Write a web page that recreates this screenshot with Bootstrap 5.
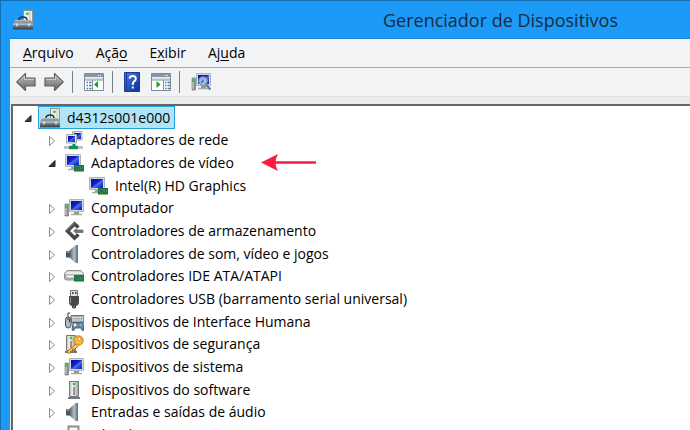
<!DOCTYPE html>
<html lang="pt-BR">
<head>
<meta charset="utf-8">
<meta name="viewport" content="width=device-width, initial-scale=1">
<title>Gerenciador de Dispositivos</title>
<link href="https://cdn.jsdelivr.net/npm/bootstrap@5.3.0/dist/css/bootstrap.min.css" rel="stylesheet">
<style>
  body { font-family: "Open Sans", "Noto Sans", sans-serif; font-size: 14px; color: #000; }
  .window { background: #1b9af7; border-top: 1px solid #176fb0; border-left: 1px solid #176fb0; padding-left: 9px; }
  .titlebar { height: 38px; padding-left: 3px; border-bottom: 1px solid #1c84d0; }
  .titlebar h1 { font-size: 18px; line-height: 24px; color: #1a2b40; padding-left: 278px; }
  .client { background: #ebebeb; }
  .menus { height: 29px; padding-left: 13px; gap: 22px; background: #f2f3f5; border-bottom: 1px solid #a5a9ac; }
  .menus .btn { font-size: 14px; line-height: 20px; color: #000; }
  .menus u { text-underline-offset: 2px; }
  .tools { height: 29px; padding-left: 6px; gap: 8px; background: #f2f3f5; border-bottom: 1px solid #dfe3e3; }
  .tools .btn { line-height: 0; }
  .tools .spaced { margin-left: 3px; }
  .rule { width: 1px; height: 22px; background: #7c7f83; }
  .pane { margin-top: 7px; border: solid #666; border-width: 2px 0 0 2px; background: #fff; margin-left: 1px; }
  .tree { display: grid; grid-auto-rows: 23px 22px 23px; padding-left: 5px; }
  .level-1 { padding-left: 24px; }
  .level-2 { padding-left: 48px; }
  .twisty { width: 20px; line-height: 0; }
  .node { padding: 0 4px 0 1px; gap: 7px; line-height: 20px; border: 1px solid transparent; white-space: nowrap; }
  .node.chosen { background: #b0e5f6; border-color: #26a0da; }
  .pointer { margin-left: 22px; }
  svg { flex: none; }
</style>
</head>
<body>
<svg width="0" height="0" class="position-absolute" aria-hidden="true">
  <defs>
    <linearGradient id="g-metal" x2="0" y2="1"><stop stop-color="#a9b6be"/><stop offset=".5" stop-color="#68767f"/><stop offset="1" stop-color="#3f4b53"/></linearGradient>
    <linearGradient id="g-arrow" x2="0" y2="1"><stop stop-color="#bcbcbc"/><stop offset="1" stop-color="#686868"/></linearGradient>
    <linearGradient id="g-screen" x2="1" y2="1"><stop stop-color="#0a0aa8"/><stop offset=".45" stop-color="#1420c8"/><stop offset=".55" stop-color="#4a6cf0"/><stop offset="1" stop-color="#0c14b0"/></linearGradient>
    <linearGradient id="g-help" x2="1" y2="1"><stop stop-color="#4b7fe0"/><stop offset="1" stop-color="#0a2c9c"/></linearGradient>
    <linearGradient id="g-cone" x2="1" y2="0"><stop stop-color="#4f5b66"/><stop offset=".6" stop-color="#b4c0ca"/><stop offset="1" stop-color="#5d7386"/></linearGradient>
    <linearGradient id="g-box" x2="1" y2="0"><stop stop-color="#b9bcbc"/><stop offset=".4" stop-color="#fafafa"/><stop offset="1" stop-color="#999"/></linearGradient>
  </defs>
  <symbol id="closed" viewBox="0 0 10 12"><path d="M2.500 2.500v9L7.500 7z" fill="#fff" stroke="#8c8c8c" stroke-width="1"/></symbol>
  <symbol id="open" viewBox="0 0 10 12"><path d="M8 3.500v6H2z" fill="#383838" stroke="#222" stroke-width="1"/></symbol>
  <symbol id="toolbox" viewBox="0 0 20 20">
    <path d="M10.500.5h9v13h-9z" fill="#edf0ee" stroke="#8d9392"/><path d="M17 1v12" stroke="#c1c6c5"/><circle cx="14.500" cy="3.800" r="1.300" fill="#19c42a"/>
    <path d="M6 10c0-4 8-4 8 0" fill="none" stroke="#28333a" stroke-width="1.600"/>
    <path d="M2 10h16l2 4H0z" fill="#8b9aa3"/><path d="M0 13h20v6H0z" fill="url(#g-metal)"/><path d="M2 10.500h16M0 14.500h20" stroke="#cbd3d7" stroke-width=".6"/><path d="M4 13.500v3M16 13.500v3" stroke="#eef2f4" stroke-width="1.200"/><path d="M0 19h20" stroke="#3a454c"/>
  </symbol>
  <symbol id="monitor" viewBox="0 0 20 20">
    <path d="M1.500 1.500h15v12h-15z" fill="#d8dbdc" stroke="#aeb3b5"/><path d="M3 3h12v9H3z" fill="url(#g-screen)"/><path d="M7 14h5v2H7z" fill="#999fa2"/><path d="M4 16.500h10" stroke="#a3a8aa" stroke-width="1.500"/>
  </symbol>
  <symbol id="chip" viewBox="0 0 10 8"><path d="M0 0h10v6.500H0z" fill="#117548"/><path d="M2 2h3v2H2zM6.500 2h2v2h-2z" fill="#0a3022" stroke="#7cc08f" stroke-width=".5"/><path d="M2 6.800h6" stroke="#d1b82c" stroke-dasharray="1 1"/></symbol>
  <symbol id="display" viewBox="0 0 20 20"><use href="#monitor" width="20" height="20"/><use href="#chip" x="10" y="12" width="10" height="8"/></symbol>
  <symbol id="network" viewBox="0 0 20 20">
    <path d="M8.500 1.500h9.500v8.500H8.500z" fill="#e2e5e8" stroke="#a7acb2"/><path d="M10 3h7v6h-7z" fill="url(#g-screen)"/>
    <path d="M2.500 4.500h10v8.500h-10z" fill="#e2e5e8" stroke="#a7acb2"/><path d="M4 6h7v6H4z" fill="url(#g-screen)"/>
    <path d="M0 17.500h19" stroke="#b1bcbc" stroke-width="2.500"/><path d="M10 14v3" stroke="#129152" stroke-width="3"/><path d="M5 17.500h9" stroke="#129152" stroke-width="3.500"/>
  </symbol>
  <symbol id="computer" viewBox="0 0 20 20">
    <path d="M5.500 1.500h14v12h-14z" fill="#d8dbdc" stroke="#aeb3b5"/><path d="M7 3h11v9H7z" fill="url(#g-screen)"/><path d="M10 14h5v2h-5z" fill="#8e9598"/><path d="M7 16.500h11" stroke="#a3a8aa" stroke-width="1.500"/>
    <path d="M1 6h3.500v12H1z" fill="#87918f" stroke="#68716f" stroke-width=".6"/><path d="M1.500 7.500h2.500" stroke="#2cdb45" stroke-width="2"/><path d="M2 10v7" stroke="#d7dcda"/>
  </symbol>
  <symbol id="storage" viewBox="0 0 20 20">
    <path d="M14.500 6.500L10.500 3 3.500 10l7 7 4-3.500" fill="none" stroke="#484848" stroke-width="3.600"/><path d="M10.500 2L3 9.500" stroke="#858585"/>
    <path d="M9 10h11" stroke="#fff" stroke-width="5"/><path d="M9.500 10l3-2.500V9H19v2.500h-6.500v1z" fill="#777" stroke="#555" stroke-width=".6"/>
  </symbol>
  <symbol id="speaker" viewBox="0 0 20 20"><path d="M2 7h4v6.500H2z" fill="#4b5359"/><path d="M5.500 6.500L11.500 1h2v18h-2l-6-5.500z" fill="url(#g-cone)"/><path d="M13.500 1v18" stroke="#60788b"/><path d="M2.500 8h3" stroke="#bfc6ca"/></symbol>
  <symbol id="drive" viewBox="0 0 20 20"><path d="M3 4.500h14l2.500 3v4.500q0 2-2 2h-15q-2 0-2-2V7.500z" fill="#b7bbbc" stroke="#8e9394"/><path d="M3 5.500h14l2 3H1z" fill="#e9ebeb"/><path d="M2 9h16v3H2z" fill="#f7f7f7" stroke="#858a8b" stroke-width=".7"/><use href="#chip" x="10" y="9" width="10" height="8"/></symbol>
  <symbol id="usb" viewBox="0 0 20 20"><path d="M6.500 1.500h7v6h-7z" fill="#e5e5e5" stroke="#777"/><path d="M8 3h1.500v2H8zM11 3h1.500v2H11z" fill="#444"/><path d="M5 7h10v6q0 3-3 4v2H8v-2q-3-1-3-4z" fill="#444a4c"/><path d="M6.500 8v6" stroke="#8c9294"/><path d="M10 17v3" stroke="#777" stroke-width="1.500"/></symbol>
  <symbol id="hid" viewBox="0 0 20 20">
    <path d="M7 3.500h13v7H7z" fill="#a9b0b3" stroke="#69757d"/><path d="M8 5.500h11M8 8h11" stroke="#f5f5f5" stroke-dasharray="1.500 1"/>
    <rect x="1.500" y="5" width="5.500" height="11" rx="2.700" fill="#b4b8ba" stroke="#464b4f"/><path d="M4 5V1h2M3 7h2.500v3" fill="none" stroke="#363c40"/>
    <path d="M9 11q2-2 4 0h2q2-2 4 0l1 7q-2 2-3-2h-6q-1 4-3 2z" fill="#73899b" stroke="#354b5e" stroke-width=".8"/><circle cx="11" cy="13" r="1.400" fill="#e8f4fb"/><circle cx="17" cy="13" r="1.400" fill="#4db9f3"/>
  </symbol>
  <symbol id="tower" viewBox="0 0 20 20"><path d="M5.500 1.500h9v15h-9z" fill="url(#g-box)" stroke="#777"/><circle cx="10" cy="4" r="1.400" fill="#24cc36"/><path d="M10 7v8" stroke="#777" stroke-width="1.500"/><path d="M4 18h12" stroke="#737878" stroke-width="2"/></symbol>
  <symbol id="security" viewBox="0 0 20 20"><use href="#tower" x="-3" y="0" width="20" height="20"/><path d="M12 10l-8.500 7.500v1.500h3v-2h2v-2h2l4-3" fill="#ffd557" stroke="#b66c12"/><circle cx="14.500" cy="6.500" r="4.700" fill="#ffb733" stroke="#c4791a"/><circle cx="15.500" cy="5" r="1.500" fill="#fff" stroke="#b66c12" stroke-width=".6"/></symbol>
  <symbol id="card" viewBox="0 0 20 20"><path d="M4.500 1.500h10v16h-10z" fill="#fafafa" stroke="#8c8c8c" stroke-width="2"/></symbol>
  <symbol id="arrow" viewBox="0 0 20 20"><path d="M.8 10L9.500 1.500V6H19v8H9.500v4.500z" fill="url(#g-arrow)" stroke="#626262" stroke-width="1.200" stroke-linejoin="round"/><path d="M2.500 10l6-6v3.500h9.500" fill="none" stroke="#d3d3d3" stroke-width=".8"/></symbol>
  <symbol id="panel" viewBox="0 0 20 18"><path d="M.5.500h19v17H.5z" fill="#fff" stroke="#7e8b99"/><path d="M1 1h18v3H1z" fill="#8796a6"/><path d="M14 2.500h4" stroke="#fff" stroke-dasharray="1 1"/><path d="M1 5.500h18" stroke="#d6dbe1" stroke-width="2"/><path d="M1 7h18" stroke="#8290a0"/></symbol>
</svg>

<div class="window min-vh-100 d-flex flex-column">
  <header class="titlebar d-flex align-items-center">
    <svg width="20" height="20" aria-hidden="true"><use href="#toolbox"/></svg>
    <h1 class="m-0 flex-grow-1 fw-normal text-center">Gerenciador de Dispositivos</h1>
  </header>

  <main class="client flex-grow-1 d-flex flex-column">
    <nav class="menus d-flex align-items-center" aria-label="Menu">
      <button type="button" class="btn border-0 p-0"><u>A</u>rquivo</button>
      <button type="button" class="btn border-0 p-0">Açã<u>o</u></button>
      <button type="button" class="btn border-0 p-0">E<u>x</u>ibir</button>
      <button type="button" class="btn border-0 p-0">Aj<u>u</u>da</button>
    </nav>

    <div class="tools d-flex align-items-center" role="toolbar" aria-label="Ferramentas">
      <button type="button" class="btn border-0 p-0" aria-label="Voltar"><svg width="20" height="20"><use href="#arrow"/></svg></button>
      <button type="button" class="btn border-0 p-0" aria-label="Avançar"><svg width="20" height="20" viewBox="0 0 20 20"><g transform="translate(20 0) scale(-1 1)"><use href="#arrow" width="20" height="20"/></g></svg></button>
      <span class="rule"></span>
      <button type="button" class="btn border-0 p-0 spaced" aria-label="Mostrar árvore"><svg width="20" height="18" viewBox="0 0 20 18"><use href="#panel" width="20" height="18"/><path d="M8.500 7v10" stroke="#8290a0"/><path d="M2.500 9.500h5M2.500 12.500h5M2.500 15.500h5" stroke="#447cb8" stroke-width="1.500" stroke-dasharray="1.500 1 2.500 0"/><path d="M14 8v7l-4-3.500z" fill="#12a51b"/></svg></button>
      <span class="rule"></span>
      <button type="button" class="btn border-0 p-0 spaced" aria-label="Ajuda"><svg width="16" height="20" viewBox="0 0 16 20"><path d="M.5.500h15v19H.5z" fill="url(#g-help)" stroke="#173b9a"/><path d="M2.500 1v18" stroke="#163793"/><path d="M5.500 6.500Q6 4 8.800 4q3 0 3 2.700 0 1.600-1.700 2.700-1.300.9-1.300 2.600v1" fill="none" stroke="#fff" stroke-width="2"/><path d="M7.800 14.500h2v2h-2z" fill="#fff"/></svg></button>
      <button type="button" class="btn border-0 p-0 spaced" aria-label="Painel de ações"><svg width="20" height="18" viewBox="0 0 20 18"><use href="#panel" width="20" height="18"/><path d="M12.500 7v10" stroke="#8290a0"/><path d="M14 9.500h5M14 12.500h5M14 15.500h5" stroke="#447cb8" stroke-width="1.500" stroke-dasharray="1.500 1 2.500 0"/><path d="M5.500 8v7l4-3.500z" fill="#12a51b"/></svg></button>
      <span class="rule"></span>
      <button type="button" class="btn border-0 p-0 spaced" aria-label="Verificar se há alterações de hardware"><svg width="20" height="20" viewBox="0 0 20 20"><use href="#computer" width="20" height="20"/><circle cx="12" cy="9" r="4.200" fill="#b9dcff" fill-opacity=".8" stroke="#8190a0" stroke-width="1.200"/><path d="M9.500 11l3-4.500v4z" fill="#3b65ce"/><path d="M15 12.500l4.500 5" stroke="#55789e" stroke-width="2"/></svg></button>
    </div>

    <section class="pane flex-grow-1">
      <ul class="tree list-unstyled m-0" role="tree" aria-label="Dispositivos">
        <li class="d-flex" role="treeitem"><span class="twisty d-flex align-items-center justify-content-center"><svg width="10" height="12"><use href="#open"/></svg></span><span class="node chosen d-flex align-items-center"><svg width="20" height="20"><use href="#toolbox"/></svg>d4312s001e000</span></li>
        <li class="level-1 d-flex" role="treeitem"><span class="twisty d-flex align-items-center justify-content-center"><svg width="10" height="12"><use href="#closed"/></svg></span><span class="node d-flex align-items-center"><svg width="20" height="20"><use href="#network"/></svg>Adaptadores de rede</span></li>
        <li class="level-1 d-flex align-items-center" role="treeitem"><span class="twisty d-flex align-items-center justify-content-center"><svg width="10" height="12"><use href="#open"/></svg></span><span class="node d-flex align-items-center"><svg width="20" height="20"><use href="#display"/></svg>Adaptadores de vídeo</span><svg class="pointer" width="56" height="20" viewBox="0 0 56 20" aria-hidden="true"><path d="M0 9.500L17 1q-5 8.500 0 17z" fill="#fb1b3f"/><path d="M13 9.500h42" stroke="#fb1b3f" stroke-width="2.600"/></svg></li>
        <li class="level-2 d-flex" role="treeitem"><span class="twisty"></span><span class="node d-flex align-items-center"><svg width="20" height="20"><use href="#display"/></svg>Intel(R) HD Graphics</span></li>
        <li class="level-1 d-flex" role="treeitem"><span class="twisty d-flex align-items-center justify-content-center"><svg width="10" height="12"><use href="#closed"/></svg></span><span class="node d-flex align-items-center"><svg width="20" height="20"><use href="#computer"/></svg>Computador</span></li>
        <li class="level-1 d-flex" role="treeitem"><span class="twisty d-flex align-items-center justify-content-center"><svg width="10" height="12"><use href="#closed"/></svg></span><span class="node d-flex align-items-center"><svg width="20" height="20"><use href="#storage"/></svg>Controladores de armazenamento</span></li>
        <li class="level-1 d-flex" role="treeitem"><span class="twisty d-flex align-items-center justify-content-center"><svg width="10" height="12"><use href="#closed"/></svg></span><span class="node d-flex align-items-center"><svg width="20" height="20"><use href="#speaker"/></svg>Controladores de som, vídeo e jogos</span></li>
        <li class="level-1 d-flex" role="treeitem"><span class="twisty d-flex align-items-center justify-content-center"><svg width="10" height="12"><use href="#closed"/></svg></span><span class="node d-flex align-items-center"><svg width="20" height="20"><use href="#drive"/></svg>Controladores IDE ATA/ATAPI</span></li>
        <li class="level-1 d-flex" role="treeitem"><span class="twisty d-flex align-items-center justify-content-center"><svg width="10" height="12"><use href="#closed"/></svg></span><span class="node d-flex align-items-center"><svg width="20" height="20"><use href="#usb"/></svg>Controladores USB (barramento serial universal)</span></li>
        <li class="level-1 d-flex" role="treeitem"><span class="twisty d-flex align-items-center justify-content-center"><svg width="10" height="12"><use href="#closed"/></svg></span><span class="node d-flex align-items-center"><svg width="20" height="20"><use href="#hid"/></svg>Dispositivos de Interface Humana</span></li>
        <li class="level-1 d-flex" role="treeitem"><span class="twisty d-flex align-items-center justify-content-center"><svg width="10" height="12"><use href="#closed"/></svg></span><span class="node d-flex align-items-center"><svg width="20" height="20"><use href="#security"/></svg>Dispositivos de segurança</span></li>
        <li class="level-1 d-flex" role="treeitem"><span class="twisty d-flex align-items-center justify-content-center"><svg width="10" height="12"><use href="#closed"/></svg></span><span class="node d-flex align-items-center"><svg width="20" height="20"><use href="#computer"/></svg>Dispositivos de sistema</span></li>
        <li class="level-1 d-flex" role="treeitem"><span class="twisty d-flex align-items-center justify-content-center"><svg width="10" height="12"><use href="#closed"/></svg></span><span class="node d-flex align-items-center"><svg width="20" height="20"><use href="#tower"/></svg>Dispositivos do software</span></li>
        <li class="level-1 d-flex" role="treeitem"><span class="twisty d-flex align-items-center justify-content-center"><svg width="10" height="12"><use href="#closed"/></svg></span><span class="node d-flex align-items-center"><svg width="20" height="20"><use href="#speaker"/></svg>Entradas e saídas de áudio</span></li>
        <li class="level-1 d-flex" role="treeitem"><span class="twisty d-flex align-items-center justify-content-center"><svg width="10" height="12"><use href="#closed"/></svg></span><span class="node d-flex align-items-center"><svg width="20" height="20"><use href="#card"/></svg>Filas de impressão</span></li>
      </ul>
    </section>
  </main>
</div>
<script src="https://cdn.jsdelivr.net/npm/bootstrap@5.3.0/dist/js/bootstrap.bundle.min.js"></script>
</body>
</html>
